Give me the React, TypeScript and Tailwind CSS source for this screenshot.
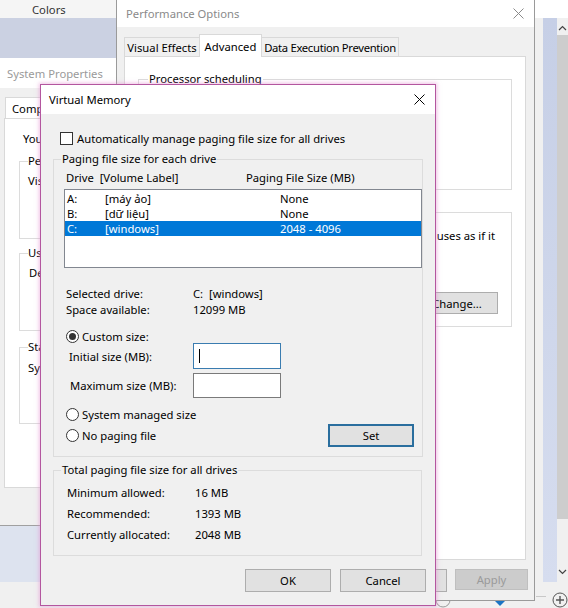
import React from "react";

function XIcon({ size, color }: { size: number; color: string }) {
  return (
    <svg width={size} height={size} viewBox={`0 0 ${size} ${size}`} fill="none" stroke={color} strokeWidth={1}>
      <path d={`M0.5 0.5 L${size - 0.5} ${size - 0.5} M${size - 0.5} 0.5 L0.5 ${size - 0.5}`} />
    </svg>
  );
}

function Radio({ checked }: { checked?: boolean }) {
  return (
    <span className="flex h-[13px] w-[13px] shrink-0 items-center justify-center rounded-full border border-[#333333] bg-white">
      {checked ? <span className="h-[7px] w-[7px] rounded-full bg-[#333333]" /> : null}
    </span>
  );
}

const rows = [
  { d: "A:", l: "[máy ảo]", s: "None", sel: false },
  { d: "B:", l: "[dữ liệu]", s: "None", sel: false },
  { d: "C:", l: "[windows]", s: "2048 - 4096", sel: true },
];

function SystemProperties() {
  return (
    <div className="absolute left-0 top-[58px] z-10 flex h-[468px] w-[300px] flex-col border-b border-[#a0a0a0] bg-[#f0f0f0]">
      <div className="flex h-[30px] shrink-0 items-center bg-white pl-[7px] text-[#9a9a9a]">System Properties</div>
      <div className="ml-[5px] mt-[9px] flex">
        <div className="flex h-[21px] w-[100px] items-center border border-b-0 border-[#d9d9d9] bg-white pl-[6px]">
          <span>Compu</span>
        </div>
      </div>
      <div className="ml-[4px] flex h-[370px] flex-col border border-[#d9d9d9] bg-white">
        <div className="ml-[18px] mt-[12px] leading-[16px]">You</div>
        <fieldset className="ml-[14px] mt-[6px] h-[86px] border border-[#dcdcdc]">
          <legend className="ml-[8px] pr-[8px] leading-[16px]">Pe</legend>
          <div className="ml-[8px] mt-[4px] leading-[16px]">Vis</div>
        </fieldset>
        <fieldset className="ml-[14px] mt-[6px] h-[86px] border border-[#dcdcdc]">
          <legend className="ml-[8px] pr-[8px] leading-[16px]">Us</legend>
          <div className="ml-[9px] mt-[4px] leading-[16px]">De</div>
        </fieldset>
        <fieldset className="ml-[14px] mt-[8px] h-[85px] border border-[#dcdcdc]">
          <legend className="ml-[8px] pr-[8px] leading-[16px]">Sta</legend>
          <div className="ml-[8px] mt-[5px] leading-[16px]">Sy</div>
        </fieldset>
      </div>
    </div>
  );
}

function PerformanceOptions() {
  return (
    <div className="absolute left-[116px] top-[-1px] z-20 flex h-[602px] w-[419px] flex-col border border-[#9a9a9a] bg-[#f0f0f0]">
      <div className="flex h-[27px] shrink-0 items-center justify-between bg-white pl-[9px] pr-[10px]">
        <span className="text-[#8a8a8a]">Performance Options</span>
        <XIcon size={11} color="#8a8a8a" />
      </div>
      <div className="ml-[7px] mt-[7px] flex h-[22px] items-end whitespace-nowrap">
        <div className="flex h-[19px] w-[76px] items-center justify-center border border-b-0 border-[#d9d9d9] bg-[#f0f0f0]">
          Visual Effects
        </div>
        <div className="relative z-10 -mb-px -ml-px flex h-[23px] w-[63px] items-center justify-center border border-b-0 border-[#d9d9d9] bg-white">
          Advanced
        </div>
        <div className="-ml-px flex h-[19px] w-[138px] items-center justify-center border border-b-0 border-[#d9d9d9] bg-[#f0f0f0] tracking-[-0.3px]">
          Data Execution Prevention
        </div>
      </div>
      <div className="ml-[7px] flex h-[504px] w-[402px] flex-col border border-[#d9d9d9] bg-white px-[13px]">
        <fieldset className="mt-[14px] h-[119px] border border-[#dcdcdc]">
          <legend className="ml-[9px] px-[1px] leading-[16px]">Processor scheduling</legend>
        </fieldset>
        <div className="mt-[22px] flex h-[115px] flex-col items-end border border-[#dcdcdc] pr-[16px]">
          <div className="mt-[15px] whitespace-nowrap leading-[16px]">uses as if it</div>
          <div className="-mr-[3px] mt-[48px] flex h-[22px] w-[82px] items-center justify-center border border-[#adadad] bg-[#e1e1e1]">
            Change...
          </div>
        </div>
      </div>
      <div className="mt-[9px] flex justify-end gap-[8px] pr-[6px]">
        <div className="h-[23px] w-[75px] border border-[#adadad] bg-[#e1e1e1]" />
        <div className="h-[23px] w-[75px] border border-[#adadad] bg-[#e1e1e1]" />
        <div className="flex h-[21px] w-[73px] items-center justify-center border border-[#bfbfbf] bg-[#cccccc] text-[#9a9a9a]">
          Apply
        </div>
      </div>
    </div>
  );
}

function VirtualMemory() {
  return (
    <div className="absolute left-[40px] top-[84px] z-30 flex h-[522px] w-[396px] flex-col border border-[#b3569f] bg-[#f0f0f0] shadow-[0_0_4px_1px_rgba(226,140,205,0.55)]">
      <div className="flex h-[29px] shrink-0 items-center justify-between bg-white pl-[8px] pr-[10px]">
        <span className="text-black">Virtual Memory</span>
        <XIcon size={11} color="#000000" />
      </div>
      <div className="flex flex-col pl-[12px] pr-[13px]">
        <div className="ml-[7px] mt-[18px] flex h-[13px] items-center gap-[4px]">
          <span className="h-[13px] w-[13px] shrink-0 border border-[#333333] bg-white" />
          <span className="leading-[15px]">Automatically manage paging file size for all drives</span>
        </div>

        <fieldset className="mt-[6px] border border-[#dcdcdc] pb-[9px]">
          <legend className="ml-[7px] px-[1px] leading-[16px]">Paging file size for each drive</legend>
          <div className="mt-[3px] flex h-[16px] items-center pl-[12px] leading-[16px]">
            <span className="w-[180px] whitespace-pre">Drive  [Volume Label]</span>
            <span>Paging File Size (MB)</span>
          </div>
          <div className="ml-[10px] mt-[3px] h-[79px] w-[358px] border border-[#828790] bg-white pt-[1px]">
            {rows.map((r) => (
              <div
                key={r.d}
                className={
                  r.sel
                    ? "flex h-[15px] items-center bg-[#0078d7] pl-[2px] leading-[15px] text-white"
                    : "flex h-[15px] items-center pl-[2px] leading-[15px]"
                }
              >
                <span className="w-[38px]">{r.d}</span>
                <span className="w-[175px]">{r.l}</span>
                <span>{r.s}</span>
              </div>
            ))}
          </div>

          <div className="mt-[18px] flex flex-col pl-[12px] leading-[16px]">
            <div className="flex">
              <span className="w-[127px]">Selected drive:</span>
              <span className="whitespace-pre">C:  [windows]</span>
            </div>
            <div className="flex">
              <span className="w-[127px]">Space available:</span>
              <span>12099 MB</span>
            </div>
          </div>

          <div className="mt-[10px] flex h-[16px] items-center gap-[3px] pl-[12px]">
            <Radio checked />
            <span>Custom size:</span>
          </div>
          <div className="-mt-px flex items-center">
            <span className="ml-[15px] w-[124px]">Initial size (MB):</span>
            <div className="flex h-[26px] w-[88px] items-center border border-[#3a7cb0] bg-white pl-[5px]">
              <span className="h-[14px] w-px bg-black" />
            </div>
          </div>
          <div className="mt-[4px] flex items-center">
            <span className="ml-[16px] w-[123px]">Maximum size (MB):</span>
            <div className="h-[25px] w-[88px] border border-[#7a7a7a] bg-white" />
          </div>
          <div className="mt-[8px] flex h-[16px] items-center gap-[3px] pl-[12px]">
            <Radio />
            <span>System managed size</span>
          </div>
          <div className="mt-[2px] flex h-[23px] items-center justify-between pl-[12px] pr-[8px]">
            <div className="flex items-center gap-[3px]">
              <Radio />
              <span>No paging file</span>
            </div>
            <div className="flex h-[23px] w-[86px] items-center justify-center border-2 border-[#2a6e9e] bg-[#e1e1e1]">
              Set
            </div>
          </div>
        </fieldset>

        <fieldset className="mt-[5px] border border-[#dcdcdc] pb-[10px]">
          <legend className="ml-[7px] px-[1px] leading-[16px]">Total paging file size for all drives</legend>
          <div className="flex flex-col pl-[13px] pt-[4px] leading-[21px]">
            <div className="flex h-[21px]">
              <span className="w-[128px]">Minimum allowed:</span>
              <span>16 MB</span>
            </div>
            <div className="flex h-[21px]">
              <span className="w-[128px]">Recommended:</span>
              <span>1393 MB</span>
            </div>
            <div className="flex h-[21px]">
              <span className="w-[128px]">Currently allocated:</span>
              <span>2048 MB</span>
            </div>
          </div>
        </fieldset>

        <div className="-mr-[4px] mt-[13px] flex justify-end gap-[9px]">
          <div className="flex h-[23px] w-[86px] items-center justify-center border border-[#adadad] bg-[#e1e1e1]">OK</div>
          <div className="flex h-[23px] w-[86px] items-center justify-center border border-[#adadad] bg-[#e1e1e1]">Cancel</div>
        </div>
      </div>
    </div>
  );
}

export default function App() {
  return (
    <div className="relative h-[608px] w-[568px] overflow-hidden bg-[#f0f0f0] font-['Noto_Sans',sans-serif] text-[11.25px] leading-[15px] text-black">
      {/* left background strips */}
      <div className="absolute left-0 top-0 flex h-[18px] w-[116px] items-center bg-[#f5f5f5] pl-[32px] text-[#333333]">
        Colors
      </div>
      <div className="absolute left-0 top-[18px] h-[40px] w-[116px] bg-[#cbd1e2]" />
      <div className="absolute left-0 top-[526px] h-[56px] w-[116px] bg-[#dde3ef]" />

      {/* right background strips */}
      <div className="absolute left-[535px] top-0 h-[18px] w-[33px] bg-white" />
      <div className="absolute left-[543px] top-[18px] h-[564px] w-[14px] bg-gradient-to-b from-[#c6cfe6] to-[#d6ddef]" />
      <div className="absolute left-[557px] top-[18px] flex h-[564px] w-[11px] flex-col items-center bg-[#f0f0f0]">
        <svg width="9" height="6" viewBox="0 0 9 6" className="mt-[7px]" fill="none" stroke="#444" strokeWidth="1.2">
          <path d="M1 5 L4.5 1.5 L8 5" />
        </svg>
        <div className="mt-[4px] h-[484px] w-[11px] bg-[#cdcdcd]" />
        <svg width="9" height="6" viewBox="0 0 9 6" className="mt-[50px]" fill="none" stroke="#444" strokeWidth="1.2">
          <path d="M1 1 L4.5 4.5 L8 1" />
        </svg>
      </div>

      {/* desktop bits below windows */}
      <svg className="absolute left-[434px] top-[596px]" width="18" height="14" viewBox="0 0 18 14" fill="none" stroke="#9a9a9a">
        <circle cx="9" cy="4" r="7" />
      </svg>
      <svg className="absolute left-[494px] top-[600px]" width="12" height="6" viewBox="0 0 12 6">
        <path d="M0 0 L12 0 L6 6 Z" fill="#1b74c4" />
      </svg>
      <div className="absolute left-[536px] top-[596px] h-px w-[10px] bg-[#c8c8c8]" />
      <svg className="absolute left-[552px] top-[592px]" width="16" height="16" viewBox="0 0 16 16" fill="none" stroke="#555" strokeWidth="1">
        <circle cx="8" cy="8" r="7" />
        <path d="M8 4 V12 M4 8 H12" strokeWidth="1.4" />
      </svg>

      <SystemProperties />
      <PerformanceOptions />
      <VirtualMemory />
    </div>
  );
}
